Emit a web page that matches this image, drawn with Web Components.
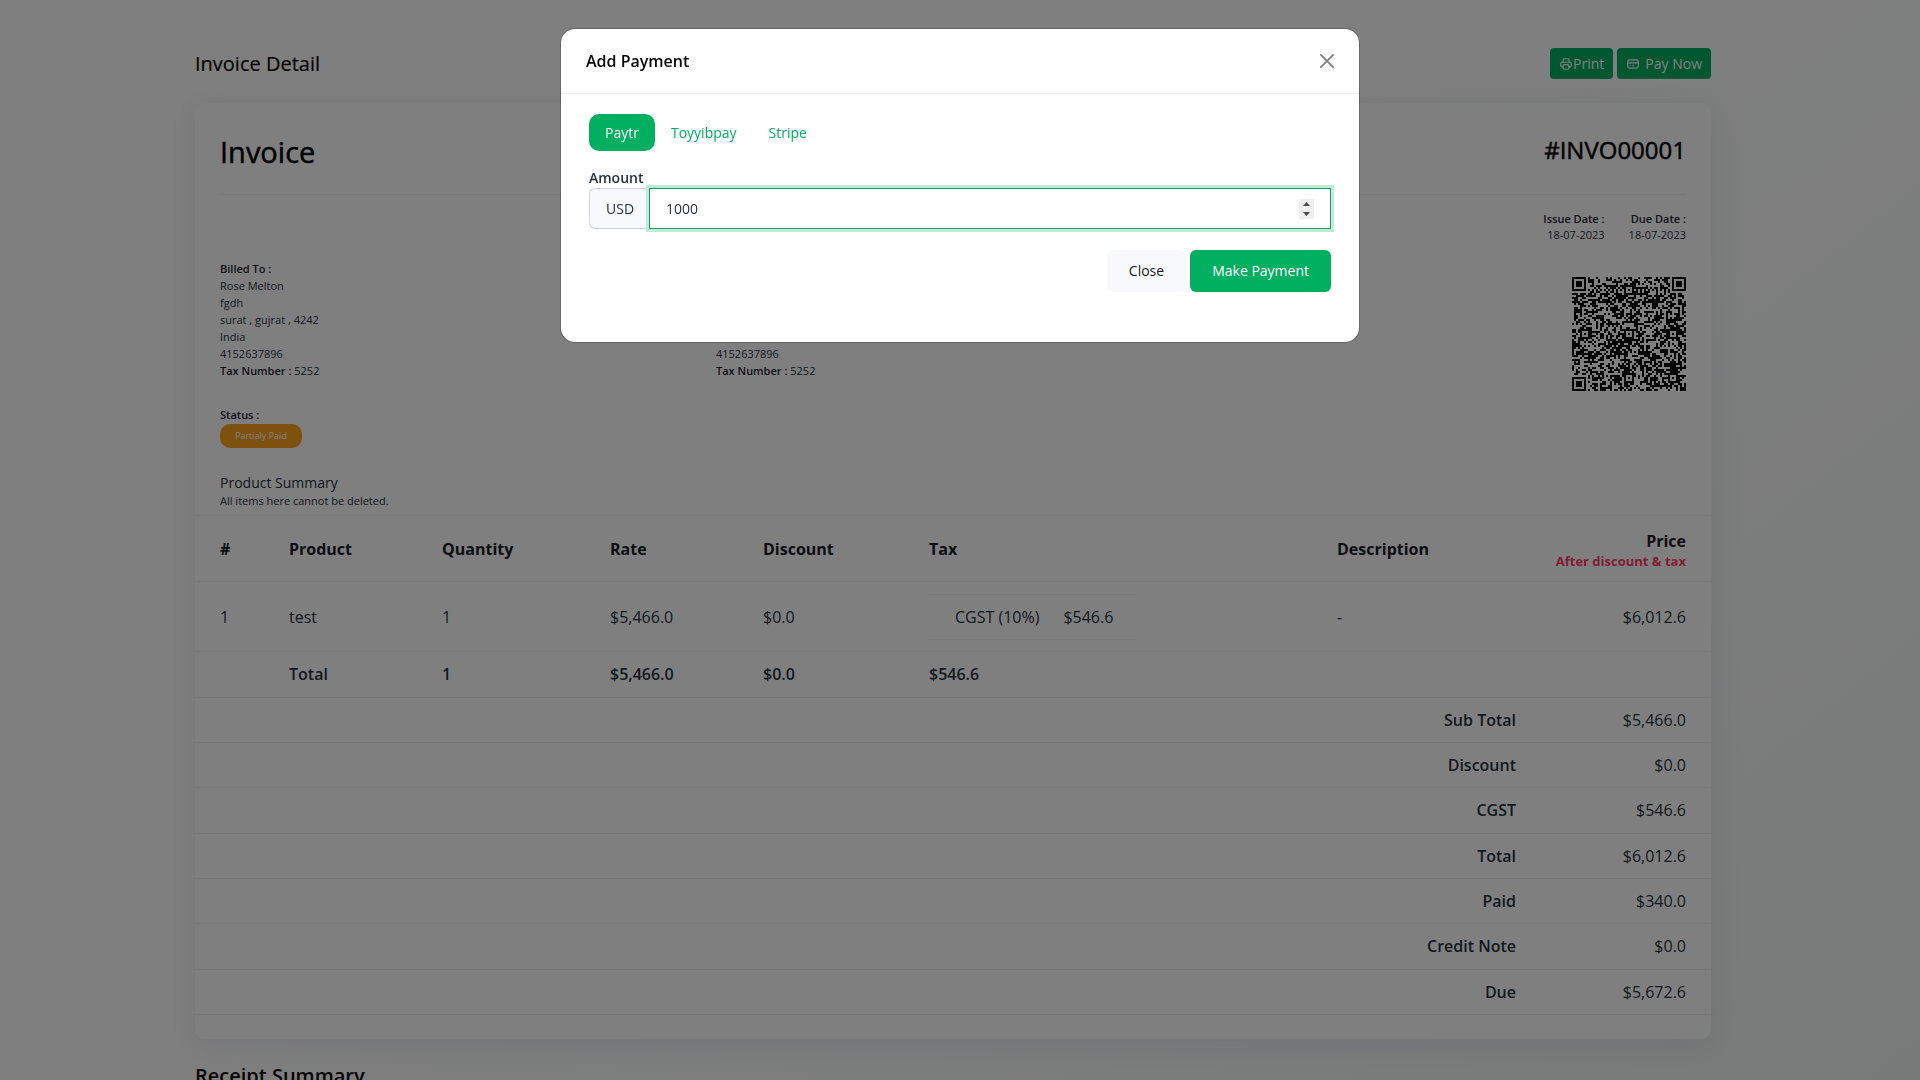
<!DOCTYPE html>
<html lang="en">
<head>
<meta charset="utf-8">
<title>Invoice Detail</title>
<style>
html, body { margin: 0; height: 100%; }
body {
  font-family: "Open Sans", sans-serif; font-size: 14px; line-height: 21px; color: #293240;
  background: linear-gradient(141deg, #fff 45%, #f1f5f3 100%);
  overflow: hidden;
}
</style>
</head>
<body>
<invoice-page></invoice-page>
<payment-modal heading="Add Payment"></payment-modal>
<script>
function define(name, html, setup) {
  customElements.define(name, class extends HTMLElement {
    constructor() {
      super();
      const t = document.createElement('template');
      t.innerHTML = '<style>*{box-sizing:border-box}</style>' + html;
      this.attachShadow({ mode: 'open' }).append(t.content.cloneNode(true));
    }
    connectedCallback() { if (setup) setup(this.shadowRoot, this); }
  });
}

define('app-button', `
<style>
:host { display: inline-flex; }
button { font: inherit; cursor: pointer; display: inline-flex; align-items: center; justify-content: center;
  border: 0; border-radius: 6px; background: #00af60; color: #fff; padding: 10px 22px; line-height: 22px; }
:host([size=small]) button { border-radius: 4px; padding: 5px 9px; line-height: 21px; }
:host([tone=light]) button { background: #f8f9fd; color: #1a1d21; }
</style>
<button type="button"><slot></slot></button>`);

define('app-icon', `
<style>
:host { display: inline-flex; }
svg { width: 14px; height: 14px; fill: none; stroke: currentColor; stroke-width: 2; stroke-linecap: round; stroke-linejoin: round; }
</style>
<svg viewBox="0 0 24 24" aria-hidden="true"></svg>`, (root, el) => {
  root.querySelector('svg').innerHTML = {
    printer: '<path d="M17 17h2a2 2 0 0 0 2-2v-4a2 2 0 0 0-2-2H5a2 2 0 0 0-2 2v4a2 2 0 0 0 2 2h2M17 9V5a2 2 0 0 0-2-2H9a2 2 0 0 0-2 2v4"/><rect x="7" y="13" width="10" height="8" rx="2"/>',
    card: '<rect x="3" y="5" width="18" height="14" rx="3"/><path d="M3 10h18M7 15h.01M11 15h2"/>'
  }[el.getAttribute('name')];
});

define('qr-code', `
<style>:host { display: block; } svg { display: block; width: 114px; height: 114px; }</style>
<svg viewBox="0 0 57 57" shape-rendering="crispEdges" role="img" aria-label="Invoice QR code"><path fill="#000"/></svg>`, root => {
  const n = 57, align = [6, 28, 50];
  let seed = 72023, d = '';
  const ring = (x, y, cx, cy) => Math.max(Math.abs(x - cx), Math.abs(y - cy));
  for (let y = 0; y < n; y++) for (let x = 0; x < n; x++) {
    seed = (seed * 1103515245 + 12345) % 2147483648;
    let on = (seed >> 16) % 100 < 52;
    if (x === 6 || y === 6) on = (x + y) % 2 === 0;
    for (const ax of align) for (const ay of align) {
      if ((ax === 6 && ay !== 28) || (ay === 6 && ax !== 28)) continue;
      const r = ring(x, y, ax, ay);
      if (r <= 2) on = r !== 1;
    }
    for (const [cx, cy] of [[3, 3], [53, 3], [3, 53]]) {
      const r = ring(x, y, cx, cy);
      if (r <= 4) on = r !== 4 && r !== 2;
    }
    if (on) d += 'M' + x + ' ' + y + 'h1v1h-1z';
  }
  root.querySelector('path').setAttribute('d', d);
});

define('contact-block', `
<style>
:host { display: block; font-size: 11px; line-height: 17px; }
::slotted(p) { margin: 0; }
</style><slot></slot>`);

define('invoice-table', `
<style>
:host { display: block; font-size: 16px; line-height: 24px; }
table { border-collapse: collapse; width: 100%; table-layout: fixed; }
th, td { text-align: left; padding: 10px 25px; border-bottom: 1px solid #f1f1f1; font-weight: 400; }
thead th { border-top: 1px solid #f1f1f1; font-weight: 700; color: #1a1d26; height: 66px; padding-block: 8px; }
thead th:last-child, .item > td:last-child, .totals th, .totals td { text-align: right; }
thead small { display: block; font-size: 13px; line-height: 16px; color: #ff3a6e; white-space: nowrap; }
thead th:last-child { padding-left: 0; }
.item > td { padding-block: 12px 11px; }
.item > td:nth-child(6) { padding-right: 0; }
.sum td, .totals th { font-weight: 600; }
.sum td { padding-bottom: 11px; }
.totals tr:nth-child(3n) > * { padding-bottom: 11px; }
.tax { width: auto; table-layout: auto; }
.tax td { padding: 10px 0 10px 24px; border-top: 1px solid #f1f1f1; }
.tax td:first-child { padding-left: 26px; }
.tax td:last-child { padding-right: 22px; }
</style>
<table>
<colgroup><col style="width:69px"><col style="width:153px"><col style="width:168px"><col style="width:153px"><col style="width:166px"><col><col style="width:229px"><col style="width:170px"></colgroup>
<thead><tr><th>#</th><th>Product</th><th>Quantity</th><th>Rate</th><th>Discount</th><th>Tax</th><th>Description</th>
<th>Price<small>After discount &amp; tax</small></th></tr></thead>
<tbody>
<tr class="item"><td>1</td><td>test</td><td>1</td><td>$5,466.0</td><td>$0.0</td>
<td><table class="tax"><tr><td>CGST (10%)</td><td>$546.6</td></tr></table></td><td>-</td><td>$6,012.6</td></tr>
<tr class="sum"><td></td><td>Total</td><td>1</td><td>$5,466.0</td><td>$0.0</td><td>$546.6</td><td></td><td></td></tr>
</tbody>
<tbody class="totals"></tbody>
</table>`, root => {
  root.querySelector('.totals').innerHTML = [['Sub Total', '$5,466.0'], ['Discount', '$0.0'], ['CGST', '$546.6'], ['Total', '$6,012.6'],
    ['Paid', '$340.0'], ['Credit Note', '$0.0'], ['Due', '$5,672.6']]
    .map(([k, v]) => `<tr><td colspan="6"></td><th scope="row">${k}</th><td>${v}</td></tr>`).join('');
});

define('invoice-page', `
<style>
:host { display: block; padding: 48px 14px 0 0; }
main { width: 90%; max-width: 1516px; margin: 0 auto; }
.bar { display: flex; justify-content: space-between; align-items: center; }
h1, h2, h3 { margin: 0; color: #060606; font-weight: 500; }
h1 { -webkit-text-stroke: 0.2px currentColor; }
.title { -webkit-text-stroke: 0.5px currentColor; }
.bar h1 { font-size: 20px; line-height: 30px; }
.actions { display: flex; gap: 4px; }
.gap { gap: 5px; display: inline-flex; align-items: center; }
.card { margin-top: 24px; background: #fff; border-radius: 10px; box-shadow: 0 6px 30px rgba(182,186,203,.3); padding-bottom: 24px; }
.body { padding: 28px 25px 6px; }
.title { display: flex; justify-content: space-between; border-bottom: 1px solid #f1f1f1; height: 64px; }
.title h2 { font-size: 29px; line-height: 42px; }
.title h3 { font-size: 24px; line-height: 38px; }
b { font-weight: 600; color: #1f2630; }
.dates { display: flex; justify-content: flex-end; gap: 24px; margin-top: 16px; text-align: right; font-size: 11px; line-height: 16px; }
.parties { display: grid; grid-template-columns: 496px 1fr auto; margin-top: 17px; align-items: start; }
.shipped { align-self: end; padding-bottom: 12px; }
.parties qr-code { margin-top: 17px; }
.status { margin-top: 15px; font-size: 11px; line-height: 17px; }
.badge { display: table; margin-top: 1px; background: #ffa21d; color: #fff; border-radius: 10px; font-size: 9px; line-height: 24px; padding: 0 15px; }
.summary { margin: 24px 0 0; font-size: 14px; line-height: 21px; }
.note { margin: 0; font-size: 11px; line-height: 16px; }
.receipt { font-size: 20px; line-height: 30px; font-weight: 600; margin-top: 22px; }
</style>
<main>
<div class="bar"><h1>Invoice Detail</h1>
<div class="actions"><app-button size="small"><app-icon name="printer"></app-icon>Print</app-button>
<app-button size="small"><span class="gap"><app-icon name="card"></app-icon>Pay Now</span></app-button></div></div>
<section class="card">
<div class="body">
<div class="title"><h2>Invoice</h2><h3>#INVO00001</h3></div>
<div class="dates"><div><b>Issue Date :</b><br>18-07-2023</div><div><b>Due Date :</b><br>18-07-2023</div></div>
<div class="parties">
<contact-block><p><b>Billed To :</b></p><p>Rose Melton</p><p>fgdh</p><p>surat , gujrat , 4242</p><p>India</p><p>4152637896</p><p><b>Tax Number :</b> 5252</p></contact-block>
<contact-block class="shipped"><p>4152637896</p><p><b>Tax Number :</b> 5252</p></contact-block>
<qr-code></qr-code>
</div>
<div class="status"><b>Status :</b><span class="badge">Partialy Paid</span></div>
<p class="summary">Product Summary</p>
<p class="note">All items here cannot be deleted.</p>
</div>
<invoice-table></invoice-table>
</section>
<h2 class="receipt">Receipt Summary</h2>
</main>`);

define('payment-modal', `
<style>
:host { position: fixed; inset: 0; background: rgba(0,0,0,.5); display: flex; justify-content: center; align-items: flex-start; padding-top: 28px; }
section { width: 800px; max-width: 100%; background: #fff; background-clip: padding-box; border: 1px solid rgba(0,0,0,.2); border-radius: 15px; }
header { display: flex; justify-content: space-between; align-items: center; padding: 20px 25px; border-bottom: 1px solid #f1f1f1; }
h2 { margin: 0; font-size: 16px; line-height: 24px; font-weight: 600; color: #060606; }
.x { border: 0; background: none; padding: 0; display: flex; cursor: pointer; }
.x svg { width: 14px; height: 14px; stroke: #7f7f7f; stroke-width: 2; stroke-linecap: round; }
.content { padding: 20px 28px 50px; }
nav { display: flex; }
nav a { padding: 8px 16px; line-height: 21px; border-radius: 10px; color: #00af60; text-decoration: none; }
nav a[aria-current] { background: #00af60; color: #fff; }
label { display: block; font-weight: 600; margin-top: 16px; line-height: 21px; }
.group { display: flex; height: 41px; }
.unit { display: flex; align-items: center; padding: 0 13px 0 16px; width: 60px; background: #f8f9fd; border: 1px solid #ced4da; border-right: 0; border-radius: 6px 0 0 6px; }
.field { flex: 1; display: flex; align-items: center; border: 1px solid #0fa565; padding: 0 16px; background: #fff; box-shadow: 0 0 0 3px #bfebd7; }
input { flex: 1; min-width: 0; height: 100%; font: inherit; color: inherit; border: 0; outline: 0; padding: 0; background: none; appearance: textfield; -moz-appearance: textfield; }
input::-webkit-inner-spin-button { display: none; }
.steps { display: flex; flex-direction: column; width: 15px; height: 20px; background: #efefef; }
.steps button { flex: 1; border: 0; padding: 0; background: none; display: flex; align-items: center; justify-content: center; }
.steps svg { width: 7px; height: 4px; fill: #4a4a4a; }
footer { display: flex; justify-content: flex-end; gap: 4px; margin-top: 21px; }
</style>
<section role="dialog" aria-modal="true">
<header><h2></h2><button class="x" type="button" aria-label="Close dialog"><svg viewBox="0 0 16 16"><path d="M1 1l14 14M15 1L1 15"/></svg></button></header>
<div class="content">
<nav><a href="#paytr" aria-current="true">Paytr</a><a href="#toyyibpay">Toyyibpay</a><a href="#stripe">Stripe</a></nav>
<label for="amount">Amount</label>
<div class="group"><span class="unit">USD</span><div class="field"><input id="amount" type="number" value="1000">
<span class="steps"><button type="button" aria-label="Increase"><svg viewBox="0 0 7 4"><path d="M0 4L3.500 0L7 4z"/></svg></button><button type="button" aria-label="Decrease"><svg viewBox="0 0 7 4"><path d="M0 0L3.500 4L7 0z"/></svg></button></span></div></div>
<footer><app-button tone="light">Close</app-button><app-button>Make Payment</app-button></footer>
</div>
</section>`, (root, el) => {
  root.querySelector('h2').textContent = el.getAttribute('heading');
  const input = root.querySelector('input'), [up, down] = root.querySelectorAll('.steps button');
  up.onclick = () => input.stepUp();
  down.onclick = () => input.stepDown();
});
</script>
</body>
</html>
